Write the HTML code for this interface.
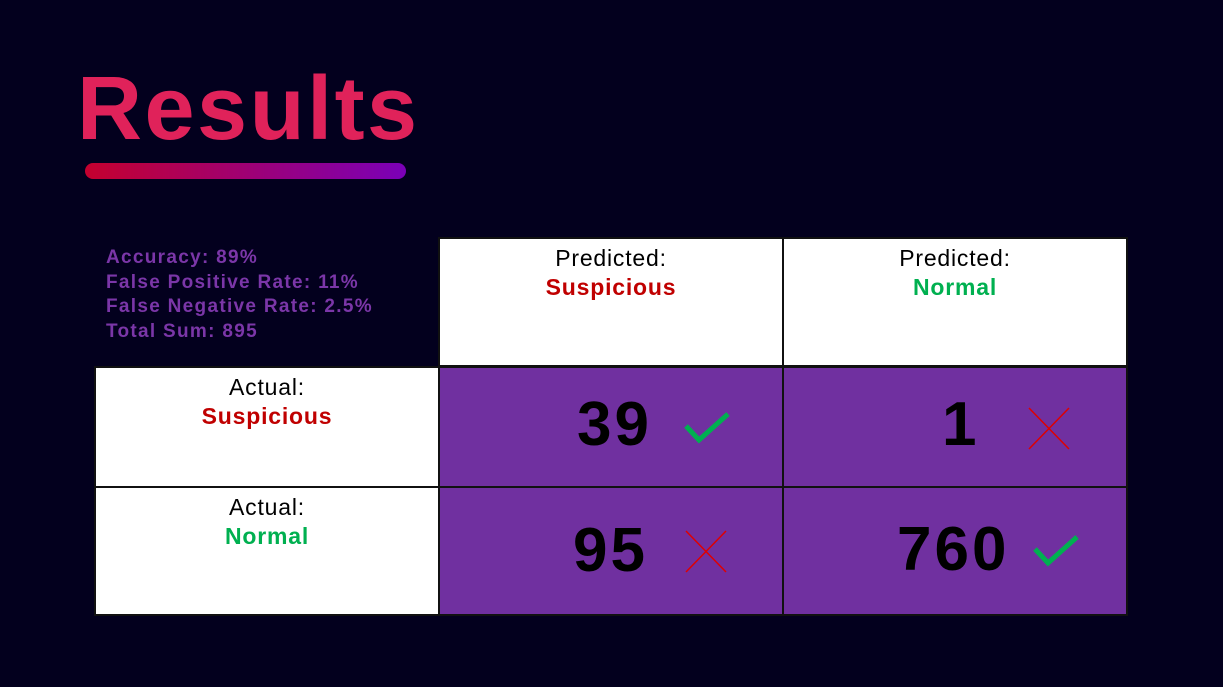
<!DOCTYPE html>
<html><head><meta charset="utf-8"><style>
*{margin:0;padding:0;box-sizing:border-box}
body{width:1223px;height:687px;background:#03001e;position:relative;overflow:hidden;font-family:"Liberation Sans",sans-serif}
.a{position:absolute;white-space:nowrap}
.cell{position:absolute;border:2px solid #111}
.w{background:#fff}
.p{background:#7030a0}
.lbl{position:absolute;left:0;right:0;text-align:center;font-size:23px;line-height:29px;letter-spacing:0.8px}
.num{position:absolute;font-size:62px;font-weight:bold;line-height:62px;color:#000;letter-spacing:3px}
</style></head><body>
<div class="a" style="left:77px;top:64px;font-size:90px;line-height:90px;font-weight:bold;color:#e0225a;letter-spacing:2.5px">Results</div>
<div class="a" style="left:85px;top:163px;width:321px;height:16px;border-radius:8px;background:linear-gradient(90deg,#c4002e,#7a00b8)"></div>
<div class="a" style="left:106px;top:246px;font-size:19px;line-height:24.6px;font-weight:bold;color:#7b36a8;letter-spacing:1.3px">Accuracy: 89%<br>False Positive Rate: 11%<br>False Negative Rate: 2.5%<br>Total Sum: 895</div>

<div class="cell w" style="left:438px;top:237px;width:346px;height:130px"><div class="lbl" style="top:5px">Predicted:<br><b style="color:#c00000">Suspicious</b></div></div>
<div class="cell w" style="left:782px;top:237px;width:346px;height:130px"><div class="lbl" style="top:5px">Predicted:<br><b style="color:#00b050">Normal</b></div></div>
<div class="cell w" style="left:94px;top:366px;width:346px;height:122px"><div class="lbl" style="top:5px">Actual:<br><b style="color:#c00000">Suspicious</b></div></div>
<div class="cell w" style="left:94px;top:486px;width:346px;height:130px"><div class="lbl" style="top:5px">Actual:<br><b style="color:#00b050">Normal</b></div></div>
<div class="cell p" style="left:438px;top:366px;width:346px;height:122px"></div>
<div class="cell p" style="left:782px;top:366px;width:346px;height:122px"></div>
<div class="cell p" style="left:438px;top:486px;width:346px;height:130px"></div>
<div class="cell p" style="left:782px;top:486px;width:346px;height:130px"></div>

<div class="num" style="left:577px;top:394px">39</div>
<div class="num" style="left:942px;top:394px">1</div>
<div class="num" style="left:573px;top:520px">95</div>
<div class="num" style="left:897px;top:519px">760</div>

<svg class="a" style="left:0;top:0" width="1223" height="687">
<polyline points="686,426 699,440 728,414" fill="none" stroke="#00b050" stroke-width="5"/>
<polyline points="1035,549 1048,563 1077,537" fill="none" stroke="#00b050" stroke-width="5"/>
<path d="M1029 408L1069 449M1069 408L1029 449" stroke="#e00000" stroke-width="1.5"/>
<path d="M686 531L726 572M726 531L686 572" stroke="#e00000" stroke-width="1.5"/>
</svg>
</body></html>
